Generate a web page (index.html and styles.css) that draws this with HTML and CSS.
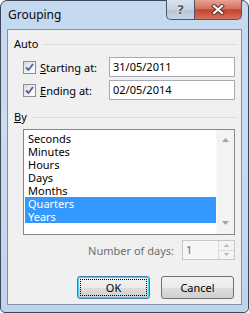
FILE: index.html
```html
<!DOCTYPE html>
<html lang="en">
  <head>
    <meta charset="UTF-8" />
    <title>Grouping</title>
    <link rel="stylesheet" href="styles.css">
  </head>
  <body>
    <div class="window">
      <div class="titlebar">
        <span class="title">Grouping</span>
        <div class="caption-buttons">
          <div class="cap-btn help">?</div>
          <div class="cap-btn close">
            <svg width="14" height="11" viewBox="0 0 14 11">
              <path d="M3 2 L11 9 M11 2 L3 9" stroke="#5a2a25" stroke-width="4" stroke-linecap="square" />
              <path d="M3 2 L11 9 M11 2 L3 9" stroke="#ffffff" stroke-width="2.2" stroke-linecap="square" />
            </svg>
          </div>
        </div>
      </div>

      <div class="client">
        <div class="group-head">
          <span>Auto</span>
          <i class="rule"></i>
        </div>

        <div class="field-row">
          <span class="check">
            <svg width="9" height="9" viewBox="0 0 9 9">
              <path d="M1 4.5 L3.5 7 L8 1" fill="none" stroke="#4b61a8" stroke-width="1.8" />
            </svg>
          </span>
          <span class="field-label"><u>S</u>tarting at:</span>
          <div class="textbox">31/05/2011</div>
        </div>
        <div class="field-row">
          <span class="check">
            <svg width="9" height="9" viewBox="0 0 9 9">
              <path d="M1 4.5 L3.5 7 L8 1" fill="none" stroke="#4b61a8" stroke-width="1.8" />
            </svg>
          </span>
          <span class="field-label"><u>E</u>nding at:</span>
          <div class="textbox">02/05/2014</div>
        </div>

        <div class="group-head by">
          <span><u>B</u>y</span>
          <i class="rule"></i>
        </div>

        <div class="listbox">
          <ul class="items">
            <li>Seconds</li>
            <li>Minutes</li>
            <li>Hours</li>
            <li>Days</li>
            <li>Months</li>
            <li class="sel">Quarters</li>
            <li class="sel">Years</li>
          </ul>
          <div class="scrollbar">
            <svg width="7" height="4" viewBox="0 0 7 4"><path d="M0 4 L3.5 0 L7 4 Z" fill="#a3a3a3" /></svg>
            <svg width="7" height="4" viewBox="0 0 7 4"><path d="M0 0 L3.5 4 L7 0 Z" fill="#a3a3a3" /></svg>
          </div>
        </div>

        <div class="days-row">
          <span class="days-label">Number of days:</span>
          <div class="spin">
            <span class="spin-val">1</span>
            <div class="spin-btns">
              <div class="spin-btn">
                <svg width="5" height="3" viewBox="0 0 5 3"><path d="M0 3 L2.5 0 L5 3 Z" fill="#b4b4b4" /></svg>
              </div>
              <div class="spin-btn">
                <svg width="5" height="3" viewBox="0 0 5 3"><path d="M0 0 L2.5 3 L5 0 Z" fill="#b4b4b4" /></svg>
              </div>
            </div>
          </div>
        </div>

        <div class="buttons">
          <button class="btn default"><span class="focus">OK</span></button>
          <button class="btn">Cancel</button>
        </div>
      </div>
    </div>
  </body>
</html>
```

FILE: styles.css
```css
html,
body {
  margin: 0;
  padding: 0;
  background: #ffffff;
}

body {
  font-family: "Noto Sans", "Open Sans", sans-serif;
  font-size: 11px;
  color: #000000;
}

.window {
  box-sizing: border-box;
  width: 249px;
  height: 313px;
  border: 1px solid #3d4756;
  border-radius: 7px 7px 5px 5px;
  background: linear-gradient(#c4d9f0, #c9dcf1 40%, #bfd4ec);
  display: flex;
  flex-direction: column;
  padding: 0 6px 7px 6px;
}

.titlebar {
  height: 28px;
  display: flex;
  justify-content: space-between;
  align-items: flex-start;
}

.title {
  margin-top: 5px;
  margin-left: 1px;
  font-size: 12px;
  line-height: 18px;
  color: #0b0b0b;
}

.caption-buttons {
  display: flex;
  margin-top: -1px;
}

.cap-btn {
  box-sizing: border-box;
  height: 20px;
  border: 1px solid #4d5664;
  border-top: none;
  display: flex;
  align-items: center;
  justify-content: center;
}

.help {
  width: 28px;
  border-right: none;
  border-radius: 0 0 0 5px;
  background: linear-gradient(#d9e3ee, #c5d2e1 50%, #b4c3d4 51%, #c6d6e7);
  color: #56606c;
  font-family: "DejaVu Sans", sans-serif;
  font-weight: bold;
  font-size: 13px;
  text-shadow: 0 0 1px #ffffff, 0 0 2px #ffffff;
}

.close {
  width: 48px;
  border-radius: 0 0 5px 0;
  background: linear-gradient(#e7a497, #d5705f 45%, #c2432e 52%, #d6735d);
}

.client {
  flex: 1;
  border: 1px solid #8193aa;
  background: #f0f0f0;
  display: flex;
  flex-direction: column;
}

.group-head {
  margin-top: 7px;
  padding-left: 6px;
  height: 14px;
  line-height: 14px;
  display: flex;
  align-items: center;
}

.group-head.by {
  margin-top: 10px;
}

.rule {
  flex: 1;
  height: 1px;
  background: #d5dfe5;
  margin: 0 3px 0 4px;
}

.field-row {
  display: flex;
  align-items: center;
  height: 20px;
  margin: 6px 0 0 15px;
}

.field-row + .field-row {
  margin-top: 3px;
}

.check {
  box-sizing: border-box;
  width: 13px;
  height: 13px;
  border: 1px solid #8f8f8f;
  background: linear-gradient(135deg, #dcdcdc, #ffffff);
  display: flex;
  align-items: center;
  justify-content: center;
}

.field-label {
  width: 69px;
  margin-left: 4px;
}

.textbox {
  box-sizing: border-box;
  width: 126px;
  height: 20px;
  border: 1px solid #a7abb0;
  background: #ffffff;
  padding-left: 3px;
  line-height: 18px;
}

.listbox {
  box-sizing: border-box;
  height: 106px;
  margin: 5px 6px 0 15px;
  border: 1px solid #828790;
  background: #ffffff;
  display: flex;
}

.items {
  list-style: none;
  margin: 0;
  padding: 2px 0 0 1px;
  flex: 1;
}

.items li {
  height: 13px;
  line-height: 13px;
  padding-left: 3px;
  color: #000000;
}

.items li.sel {
  background: #3399ff;
  color: #ffffff;
}

.scrollbar {
  width: 17px;
  background: #f3f3f3;
  border-left: 1px solid #f8f8f8;
  display: flex;
  flex-direction: column;
  justify-content: space-between;
  align-items: center;
  padding: 8px 0 9px 0;
}

.days-row {
  display: flex;
  justify-content: flex-end;
  align-items: center;
  margin: 5px 6px 0 0;
}

.days-label {
  color: #6d6d6d;
  margin-right: 8px;
}

.spin {
  box-sizing: border-box;
  width: 53px;
  height: 20px;
  border: 1px solid #c7c7c7;
  background: #f6f6f6;
  display: flex;
}

.spin-val {
  flex: 1;
  color: #6d6d6d;
  padding-left: 3px;
  line-height: 18px;
}

.spin-btns {
  width: 15px;
  display: flex;
  flex-direction: column;
  border-left: 1px solid #dadada;
}

.spin-btn {
  flex: 1;
  display: flex;
  align-items: center;
  justify-content: center;
  background: #f4f4f4;
}

.spin-btn + .spin-btn {
  border-top: 1px solid #dadada;
}

.buttons {
  display: flex;
  justify-content: flex-end;
  gap: 11px;
  margin: 16px 7px 0 0;
}

.btn {
  box-sizing: border-box;
  width: 73px;
  height: 23px;
  border: 1px solid #707070;
  border-radius: 3px;
  background: linear-gradient(#f2f2f2, #ebebeb 50%, #dddddd 51%, #cfcfcf);
  font-family: inherit;
  font-size: 11px;
  color: #000000;
  padding: 0;
}

.btn.default {
  border-color: #3c7fb1;
  box-shadow: inset 0 0 0 1px #48d0f4;
  padding: 2px;
}

.btn.default .focus {
  display: block;
  height: 100%;
  box-sizing: border-box;
  border: 1px dotted #000000;
  line-height: 15px;
}
```
